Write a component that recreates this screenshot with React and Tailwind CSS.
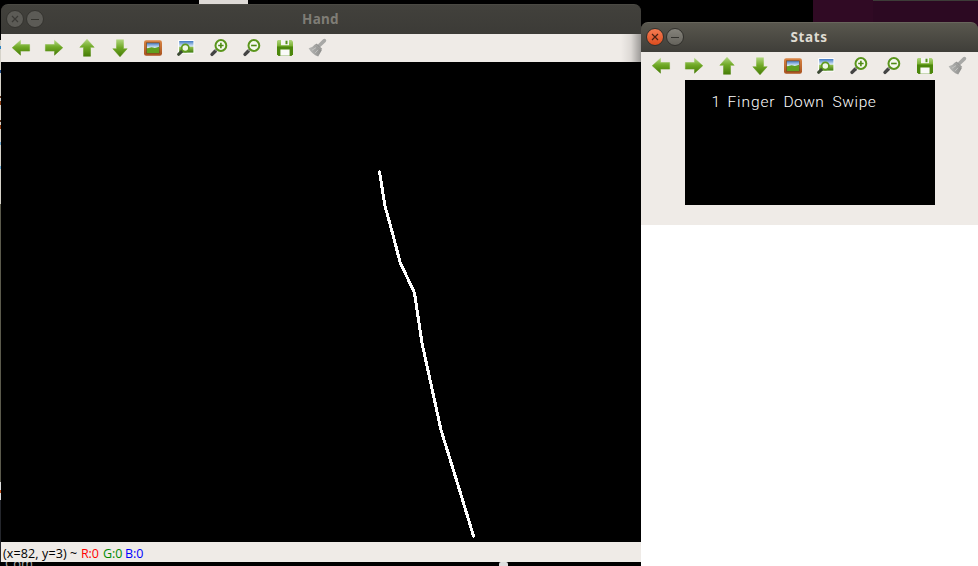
function Defs() {
  return (
    <svg width="0" height="0" className="absolute" aria-hidden="true">
      <defs>
        <linearGradient id="green" x1="0" y1="0" x2="0" y2="1">
          <stop offset="0" stopColor="#b0d67c" />
          <stop offset="0.45" stopColor="#70a926" />
          <stop offset="1" stopColor="#467c06" />
        </linearGradient>
        <linearGradient id="sky" x1="0" y1="0" x2="0" y2="1">
          <stop offset="0" stopColor="#3f78c4" />
          <stop offset="0.45" stopColor="#d5e6f4" />
          <stop offset="0.55" stopColor="#8ebc48" />
          <stop offset="1" stopColor="#3f7d10" />
        </linearGradient>
        <linearGradient id="wood" x1="0" y1="0" x2="0" y2="1">
          <stop offset="0" stopColor="#d98545" />
          <stop offset="1" stopColor="#a9521f" />
        </linearGradient>
        <linearGradient id="steel" x1="0" y1="0" x2="1" y2="0">
          <stop offset="0" stopColor="#b9b9b7" />
          <stop offset="1" stopColor="#8d8d8b" />
        </linearGradient>
      </defs>
    </svg>
  );
}

function Arrow({ d }) {
  return <path d={d} fill="url(#green)" stroke="url(#green)" strokeWidth="0.5" strokeLinejoin="round" />;
}

function Lens({ minus }) {
  return (
    <g>
      <path d="M4 17.4 7.4 14" stroke="#444" strokeWidth="3.4" strokeLinecap="round" />
      <path d="M7.6 13.8 9.6 11.8" stroke="#999" strokeWidth="2.2" />
      <circle cx="12.9" cy="8.5" r="5.4" fill="#f5f8ef" stroke="#5a951c" strokeWidth="2" />
      <path d={minus ? 'M10.1 8.5h5.6' : 'M10.2 8.5h5.4M12.9 5.8v5.4'} stroke="#4f8a14" strokeWidth="1.6" />
    </g>
  );
}

const ICONS = [
  ['left', <Arrow d="M2.2 10.7 10.5 3.3v4.2H19.6v6.6H10.5v4.1Z" />],
  ['right', <Arrow d="M19.8 10.7 11.5 3.3v4.2H2.4v6.6h9.1v4.1Z" />],
  ['up', <Arrow d="M11 2.2 18.2 10.3h-3.7V19.3h-7v-9h-3.7Z" />],
  ['down', <Arrow d="M11 19.8 18.2 11.7h-3.7V2.7h-7v9h-3.7Z" />],
  ['picture', (
    <g>
      <rect x="2" y="3.3" width="18" height="15.4" rx="2.2" fill="url(#wood)" />
      <rect x="4.6" y="5.8" width="12.8" height="10.4" fill="url(#sky)" stroke="#7c4a20" strokeWidth="0.7" />
      <path d="M5 11.8q4-2.4 6-1.3t6-.7V15.9H5Z" fill="#609f20" />
    </g>
  )],
  ['properties', (
    <g>
      <rect x="3" y="3" width="16.4" height="13.8" rx="1" fill="#fdfdfc" />
      <rect x="4.2" y="4" width="14.2" height="11.6" fill="url(#sky)" />
      <path d="M3.6 17.3 6.8 14.4" stroke="#3c4a34" strokeWidth="3" strokeLinecap="round" />
      <circle cx="10.3" cy="11" r="3.6" fill="#eff6e6" stroke="#5f9a1e" strokeWidth="1.7" />
    </g>
  )],
  ['zoomin', <Lens />],
  ['zoomout', <Lens minus />],
  ['save', (
    <g>
      <path d="M4 3H17.5L19 4.5V17.2L17.5 18.7H4.5L3 17.2V4Z" fill="url(#green)" />
      <path d="M3 9.5H19V17L17.5 18.7H4.5L3 17.2Z" fill="#4c870c" />
      <path d="M7 3h8v5.2H7Z" fill="#f4f4f2" />
      <path d="M11.5 3.7h2v3.5h-2Z" fill="#55901a" />
      <path d="M6.4 12.5h9.2v6.2H6.4Z" fill="#fafaf9" />
    </g>
  )],
  ['brush', (
    <g>
      <path d="M12.6 8.2 17.4 3.6" stroke="#a8a8a6" strokeWidth="3.6" strokeLinecap="round" />
      <path d="M8.4 7 14.8 13.2 11.2 19.4Q5 17.4 1.6 11.2Q6 10.2 8.4 7Z" fill="url(#steel)" />
      <path d="M5 13.2 9 10.6M8 16.2l3-3.4" stroke="#c9c9c7" strokeWidth="0.8" />
      <path d="M9.2 7 14.8 12.4" stroke="#929290" strokeWidth="1.3" />
    </g>
  )],
];

function Toolbar({ shade }) {
  return (
    <div className="flex h-7 shrink-0 justify-between bg-[#efebe7]">
      <div className="flex items-start gap-[11px] pt-[3px] pl-[9px]">
        {ICONS.map(([name, art]) => (
          <svg key={name} width="22" height="22" viewBox="0 0 22 22" fill="none" className="shrink-0">{art}</svg>
        ))}
      </div>
      {shade && <div className="w-5 bg-linear-to-r from-transparent via-black/8 to-black/35" />}
    </div>
  );
}

function Buttons({ active }) {
  const ring = active ? 'border-[#31302c]' : 'border-[#34332f]';
  return (
    <div className="flex w-[72px] gap-[2px] pb-px pl-[5px]">
      <span className={`flex size-[18px] items-center justify-center rounded-full border ${ring} ${active ? 'bg-linear-to-b from-[#f47b51] to-[#dc4c1c]' : 'bg-[#5c5b56]'}`}>
        <svg width="8" height="8" viewBox="0 0 8 8"><path d="M1 1 7 7M7 1 1 7" stroke={active ? '#472013' : '#3a3935'} strokeWidth="1.2" /></svg>
      </span>
      <span className={`flex size-[18px] items-center justify-center rounded-full border ${ring} ${active ? 'bg-linear-to-b from-[#85837b] to-[#65635c]' : 'bg-[#5c5b56]'}`}>
        <span className="h-px w-2 bg-[#35342f]" />
      </span>
    </div>
  );
}

function TitleBar({ title, active }) {
  return (
    <div className={`flex h-[30px] shrink-0 items-center rounded-t-[7px] border-t bg-linear-to-b ${active ? 'border-[#68665c] from-[#59574e] to-[#3f3e39]' : 'border-[#4a4943] from-[#42413c] to-[#3c3b37]'}`}>
      <Buttons active={active} />
      <div className={`flex-1 text-center font-['Noto_Sans'] text-[13.5px] leading-none font-bold ${active ? 'pr-[73px] tracking-[0.6px] text-[#dfdbd2]' : 'pr-[73px] tracking-[0.3px] text-[#7f7d76]'}`}>{title}</div>
    </div>
  );
}

function HandWindow() {
  return (
    <section className="flex h-[558px] w-[640px] flex-col">
      <TitleBar title="Hand" />
      <Toolbar shade />
      <svg width="640" height="480" viewBox="1 62 640 480" className="block bg-black" shapeRendering="crispEdges">
        <polyline points="379.5,172 385,206 393,235 400,262 414.5,293 422,343 441,430 458,485 473.5,536" fill="none" stroke="#fff" strokeWidth="3" strokeLinecap="round" />
      </svg>
      <div className="flex h-5 items-center bg-[#efebe7] pt-[4px] pl-[2px] font-['Open_Sans'] text-[12.5px] leading-none whitespace-pre text-black">
        <span className="w-[78px] tracking-[0.12px]">(x=82, y=3) ~</span>
        <span className="w-[22px] tracking-[-0.1px] text-[#f00]">R:0</span>
        <span className="w-[22px] tracking-[-0.1px] text-[#008a00]">G:0</span>
        <span className="text-[#00f]">B:0</span>
      </div>
    </section>
  );
}

function StatsWindow() {
  return (
    <section className="flex h-[203px] flex-col">
      <TitleBar title="Stats" active />
      <div className="flex-1 bg-[#efebe7]">
        <Toolbar />
        <div className="mx-auto flex h-[125px] w-[250px] bg-black pt-[12px] pl-[27px] font-['Roboto'] text-[15.5px] leading-5 font-light text-white">
          <span className="w-[16px]">1</span>
          <span className="w-[56px] tracking-[0.9px]">Finger</span>
          <span className="w-[49px] tracking-[0.4px]">Down</span>
          <span className="tracking-[0.6px]">Swipe</span>
        </div>
      </div>
    </section>
  );
}

// Sliver of the window behind, visible along the left screen edge.
const EDGE = [
  ['a', 'h-10'],
  ['b', 'h-[6px] bg-[#d5d2c9]'],
  ['c', 'h-[3px] bg-[#2b83c4]'],
  ['d', 'h-[21px] bg-[#d5d2c9]'],
  ['e', 'h-[3px] bg-[#24508c]'],
  ['f', 'h-[23px] bg-[#d5d2c9]'],
  ['g', 'h-[2px] bg-[#5c3018]'],
  ['h', 'h-[3px] bg-[#d5d2c9]'],
  ['i', 'h-[4px] bg-[#8a3c12]'],
  ['j', 'h-[15px] bg-[#d5d2c9]'],
  ['k', 'h-[2px] bg-[#5c3018]'],
  ['l', 'h-[3px] bg-[#d5d2c9]'],
  ['m', 'h-[4px] bg-[#8a3c12]'],
  ['n', 'h-[13px] bg-[#d5d2c9]'],
  ['o', 'h-[3px] bg-[#6ea9d0]'],
  ['p', 'h-[21px] bg-[#d5d2c9]'],
  ['q', 'h-[3px] bg-[#6ea9d0]'],
  ['r', 'h-[35px] bg-[#d5d2c9]'],
  ['s', 'h-[278px] bg-[#5b5a4c]'],
  ['t', 'h-[8px] bg-[#ddd]'],
  ['u', 'h-[3px] bg-[#c0531c]'],
  ['v', 'h-[7px] bg-[#ddd]'],
  ['w', 'h-[62px] bg-[#24262c]'],
];

export default function App() {
  return (
    <main className="flex h-[566px] w-[978px] overflow-hidden bg-black">
      <Defs />
      <div className="flex w-px flex-col">
        {EDGE.map(([key, look]) => <div key={key} className={`shrink-0 ${look}`} />)}
      </div>
      <div className="flex w-[640px] flex-col">
        <div className="flex h-1 pl-[198px]">
          <div className="w-[49px] bg-[#dedad6]" />
        </div>
        <HandWindow />
        <div className="flex h-1 items-start justify-between overflow-hidden pr-[133px] pl-[4px]">
          <div className="-mt-[5px] font-['Open_Sans'] text-[13px] leading-[13px] text-[#aaa]">Com</div>
          <div className="h-1 w-[9px] rounded-t-[2px] bg-[#dedede]" />
        </div>
      </div>
      <div className="flex w-[337px] flex-col">
        <div className="flex h-8 shrink-0 justify-end">
          <div className="w-[60px] bg-[#300a24]" />
          <div className="w-[105px] border-t border-[#3d3c38] bg-[#2c0922]" />
        </div>
        <div className="-mt-[10px]">
          <StatsWindow />
        </div>
        <div className="flex-1 bg-white" />
      </div>
    </main>
  );
}
